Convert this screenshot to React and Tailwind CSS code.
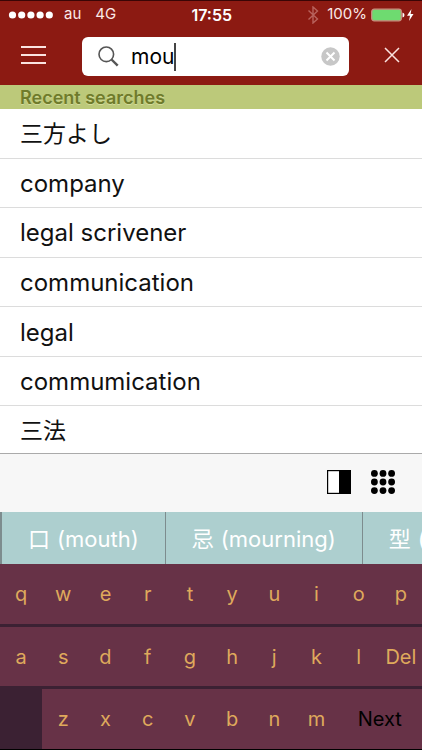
import React from "react";

const recent = [
  { text: "三方よし", lang: "ja" },
  { text: "company", lang: "en" },
  { text: "legal scrivener", lang: "en" },
  { text: "communication", lang: "en" },
  { text: "legal", lang: "en" },
  { text: "commumication", lang: "en" },
  { text: "三法", lang: "ja" },
];
const suggestions = [
  { kanji: "口", meaning: "(mouth)" },
  { kanji: "忌", meaning: "(mourning)" },
  { kanji: "型", meaning: "(mould)" },
];
const topKeys = ["q", "w", "e", "r", "t", "y", "u", "i", "o", "p"];
const middleKeys = ["a", "s", "d", "f", "g", "h", "j", "k", "l", "Del"];
const bottomKeys = ["z", "x", "c", "v", "b", "n", "m"];

function StatusBar() {
  return (
    <div className="flex h-7 items-center justify-between border-t border-[#3a0505] px-2 text-[15px] text-[#fbe9e7]">
      <div className="flex items-center">
        <svg className="mr-2.5 h-2 w-[46px]" viewBox="0 0 46 8" fill="#fff" aria-hidden="true">
          <circle cx="4.500" cy="4" r="3.600" />
          <circle cx="13.700" cy="4" r="3.600" />
          <circle cx="22.900" cy="4" r="3.600" />
          <circle cx="32.100" cy="4" r="3.600" />
          <circle cx="41.300" cy="4" r="3.600" />
        </svg>
        <span className="mr-3.5">au</span>
        <span>4G</span>
      </div>
      <span className="text-base font-semibold text-white">17:55</span>
      <div className="flex items-center">
        <svg className="mr-2 h-[18px] w-3" viewBox="0 0 12 18" fill="none" stroke="#b8625c" strokeWidth="1.400" aria-hidden="true">
          <path d="M1.500 4.500 L10.500 13 L6 17 V1 L10.500 5 L1.500 13.500" />
        </svg>
        <span className="mr-1">100%</span>
        <svg className="h-[14px] w-[43px]" viewBox="0 0 43 14" aria-hidden="true">
          <rect x="0.700" y="1.200" width="29.600" height="11.600" rx="2.500" fill="#6edb70" stroke="#c98f80" strokeWidth="1.300" />
          <path d="M31.500 4.500 Q33.500 5 33.500 7 T31.500 9.500 Z" fill="#fff" />
          <path d="M40.500 1 L36 7.800 H39 L38 13 L42.500 6 H39.600 Z" fill="#fff" />
        </svg>
      </div>
    </div>
  );
}

function SearchHeader() {
  return (
    <div className="flex items-center pt-[9px] pr-[22px] pb-[9px] pl-[21px]">
      <button type="button" aria-label="Menu" className="mr-9 flex w-[25px] flex-col gap-1.5 pb-1">
        <span className="h-0.5 w-full bg-[#fbe3e0]" />
        <span className="h-0.5 w-full bg-[#fbe3e0]" />
        <span className="h-0.5 w-full bg-[#fbe3e0]" />
      </button>
      <div className="flex h-[39px] min-w-0 flex-1 items-center rounded-md bg-white pr-[9px] pl-4">
        <svg className="mr-3 h-[21px] w-[21px]" viewBox="0 0 21 21" fill="none" stroke="#555" aria-hidden="true">
          <circle cx="8.300" cy="8.300" r="7.300" strokeWidth="1.600" />
          <path d="M13.500 13.500 L19.700 19.700" strokeWidth="2.400" />
        </svg>
        <input
          type="text"
          aria-label="Search"
          defaultValue="mou"
          className="field-sizing-content bg-transparent text-[21px] text-black outline-none"
        />
        <span className="h-7 w-0.5 bg-[#444]" />
        <button type="button" aria-label="Clear search" className="ml-auto">
          <svg className="h-[19px] w-[19px]" viewBox="0 0 19 19" aria-hidden="true">
            <circle cx="9.500" cy="9.500" r="9.200" fill="#c7c7c7" />
            <path d="M5.500 5.500 L13.500 13.500 M13.500 5.500 L5.500 13.500" stroke="#fff" strokeWidth="2" />
          </svg>
        </button>
      </div>
      <button type="button" aria-label="Close" className="ml-[35px] pb-1">
        <svg className="h-4 w-4" viewBox="0 0 16 16" stroke="#fbe3e0" strokeWidth="1.500" aria-hidden="true">
          <path d="M1 1 L15 15 M15 1 L1 15" />
        </svg>
      </button>
    </div>
  );
}

function Key({ label }) {
  return (
    <button type="button" className="flex h-full items-center justify-center bg-[#673247] text-xl text-[#dfa95c]">
      {label}
    </button>
  );
}

export default function App() {
  return (
    <div className="w-full overflow-hidden bg-white font-['Inter','Noto_Sans_CJK_JP',sans-serif]">
      <header className="bg-[#8c1a12]">
        <StatusBar />
        <SearchHeader />
      </header>

      <main>
        <h1 className="h-6 bg-[#bcc97a] px-5 text-lg leading-[26px] font-semibold text-[#6f7b2b] text-shadow-[0_1px_0_#d3dc9c]">
          Recent searches
        </h1>
        <div className="h-[344px] overflow-hidden">
          <ul className="grid h-[347px] grid-rows-7">
            {recent.map((item) => (
              <li key={item.text} lang={item.lang} className="border-b border-[#dcdcdc] text-2xl [&:lang(ja)]:text-[23px]">
                <button type="button" className="flex h-full w-full items-center px-5 pt-0.5 text-[#111]">
                  {item.text}
                </button>
              </li>
            ))}
          </ul>
        </div>
      </main>

      <div className="flex h-[59px] items-center justify-end gap-5 border-t border-[#aaa] bg-[#f7f7f7] pr-[27px] pb-0.5">
        <button type="button" aria-label="Toggle contrast">
          <svg className="h-6 w-6" viewBox="0 0 24 24" aria-hidden="true">
            <rect x="0.600" y="0.600" width="22.800" height="22.800" fill="#fff" stroke="#000" strokeWidth="1.200" />
            <rect x="12" y="0" width="12" height="24" fill="#000" />
          </svg>
        </button>
        <button type="button" aria-label="Keyboard grid">
          <svg className="h-6 w-6" viewBox="0 0 24 24" aria-hidden="true">
            {[3.4, 12, 20.6].map((y) => [3.4, 12, 20.6].map((x) => <circle key={`${x}-${y}`} cx={x} cy={y} r="3.400" />))}
          </svg>
        </button>
      </div>

      <div className="flex h-[52px] overflow-hidden bg-[#adcfcf] text-[22px] whitespace-nowrap text-white">
        {suggestions.map((item) => (
          <button
            key={item.kanji}
            type="button"
            className="flex shrink-0 items-center gap-[7px] border-l border-[#7d8c8e] px-[26px] pt-0.5 first:border-l-2"
          >
            <span lang="ja">{item.kanji}</span>
            <span>{item.meaning}</span>
          </button>
        ))}
      </div>

      <div className="flex flex-col gap-[3px] border-b border-black bg-[#3b2133]">
        <div className="grid h-[60px] grid-cols-10">
          {topKeys.map((key) => <Key key={key} label={key} />)}
        </div>
        <div className="grid h-[59px] grid-cols-10">
          {middleKeys.map((key) => <Key key={key} label={key} />)}
        </div>
        <div className="grid h-[60px] grid-cols-10">
          <span />
          {bottomKeys.map((key) => <Key key={key} label={key} />)}
          <button type="button" className="col-span-2 flex items-center justify-center bg-[#673247] text-xl text-black">Next</button>
        </div>
      </div>
    </div>
  );
}
